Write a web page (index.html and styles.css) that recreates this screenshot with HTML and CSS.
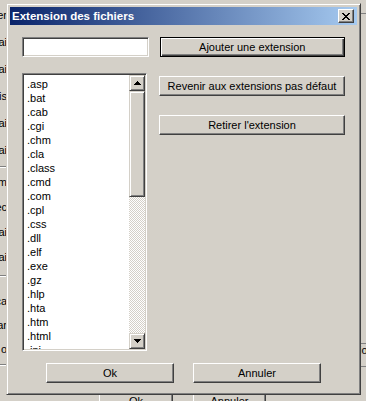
FILE: index.html
```html
<!DOCTYPE html>
<html lang="fr">
<head>
    <meta charset="UTF-8">
    <meta name="viewport" content="width=device-width, initial-scale=1.0">
    <title>Extension des fichiers</title>
    <link rel="stylesheet" href="styles.css">
</head>
<body>
<div class="screen">

    <!-- fenetre derriere -->
    <div class="backdrop">
        <div class="strip">
            <div class="grp g1">
                <div class="cut">er</div>
                <div class="cut">ai</div>
                <div class="cut">ai</div>
                <div class="cut">ilis</div>
                <div class="cut">ai</div>
                <div class="cut">ai</div>
            </div>
            <div class="sep s1"></div>
            <div class="grp g2">
                <div class="cut">m</div>
                <div class="cut">ec</div>
                <div class="cut">ai</div>
                <div class="cut">ai</div>
            </div>
            <div class="sep s2"></div>
            <div class="grp g3">
                <div class="cut">ca</div>
                <div class="cut">ar</div>
                <div class="cut">o</div>
            </div>
            <div class="sep s3"></div>
        </div>
        <div class="behind">
            <div class="btn back-ok">Ok</div>
            <div class="btn back-cancel">Annuler</div>
        </div>
        <div class="rstrip">
            <div class="rline r1"></div>
            <div class="rline r2"></div>
            <div class="rtext">io</div>
            <div class="rline r3"></div>
        </div>
    </div>

    <!-- dialogue -->
    <div class="dialog">
        <div class="titlebar">
            <span class="title">Extension des fichiers</span>
            <div class="close">
                <svg width="8" height="7" viewBox="0 0 8 7"><path d="M0 0h2v1h-2zM6 0h2v1h-2zM1 1h2v1h-2zM5 1h2v1h-2zM2 2h4v1h-4zM3 3h2v1h-2zM2 4h4v1h-4zM1 5h2v1h-2zM5 5h2v1h-2zM0 6h2v1h-2zM6 6h2v1h-2z" fill="#000"/></svg>
            </div>
        </div>

        <div class="content">
            <div class="row-top">
                <div class="field"></div>
                <div class="btn default wide">Ajouter une extension</div>
            </div>

            <div class="row-mid">
                <div class="list">
                    <div class="items">
                        <div>.asp</div>
                        <div>.bat</div>
                        <div>.cab</div>
                        <div>.cgi</div>
                        <div>.chm</div>
                        <div>.cla</div>
                        <div>.class</div>
                        <div>.cmd</div>
                        <div>.com</div>
                        <div>.cpl</div>
                        <div>.css</div>
                        <div>.dll</div>
                        <div>.elf</div>
                        <div>.exe</div>
                        <div>.gz</div>
                        <div>.hlp</div>
                        <div>.hta</div>
                        <div>.htm</div>
                        <div>.html</div>
                        <div>.ini</div>
                        <div>.js</div>
                    </div>
                    <div class="sb">
                        <div class="raised sb-btn">
                            <svg width="7" height="4" viewBox="0 0 7 4"><path d="M3 0h1v1h-1zM2 1h3v1h-3zM1 2h5v1h-5zM0 3h7v1h-7z" fill="#000"/></svg>
                        </div>
                        <div class="raised thumb"></div>
                        <div class="track"></div>
                        <div class="raised sb-btn">
                            <svg width="7" height="4" viewBox="0 0 7 4"><path d="M0 0h7v1h-7zM1 1h5v1h-5zM2 2h3v1h-3zM3 3h1v1h-1z" fill="#000"/></svg>
                        </div>
                    </div>
                </div>

                <div class="side">
                    <div class="btn wide">Revenir aux extensions pas défaut</div>
                    <div class="btn wide">Retirer l'extension</div>
                </div>
            </div>

            <div class="row-foot">
                <div class="btn foot">Ok</div>
                <div class="btn foot">Annuler</div>
            </div>
        </div>
    </div>

</div>
</body>
</html>
```

FILE: styles.css
```css
*{
    box-sizing: border-box;
}
body{
    margin: 0;
    background-color: #d4d0c8;
    font-family: "Liberation Sans", Arial, sans-serif;
    font-size: 11px;
    color: #000;
}
.screen{
    position: relative;
    width: 366px;
    height: 401px;
    overflow: hidden;
}

/* fenetre derriere */
.backdrop{
    display: grid;
    grid-template-columns: 7px 1fr 6px;
    height: 401px;
}
.strip{
    overflow: hidden;
    padding-top: 1px;
}
.cut{
    display: flex;
    justify-content: flex-end;
    align-items: center;
    white-space: nowrap;
}
.g1 .cut{ height: 27px; }
.g2 .cut{ height: 25px; }
.g3 .cut{ height: 24px; }
.sep{
    height: 2px;
    border-top: 1px solid #808080;
    border-bottom: 1px solid #fff;
}
.s1{ margin-top: 3px; }
.g2{ margin-top: 1px; }
.s2{ margin-top: 6px; }
.g3{ margin-top: 12px; }
.s3{ margin-top: 3px; }

.behind{
    display: flex;
    gap: 20px;
    padding: 389px 0 0 92px;
}
.back-ok{ width: 74px; height: 23px; }
.back-cancel{ width: 73px; height: 23px; }

.rstrip{
    overflow: hidden;
    white-space: nowrap;
}
.rline{
    height: 1px;
    background-color: #808080;
}
.r1{ margin-top: 13px; }
.r2{ margin-top: 329px; }
.rtext{
    height: 12px;
    line-height: 12px;
    margin-left: -1px;
}
.r3{ margin-top: 10px; }

/* dialogue */
.dialog{
    position: absolute;
    left: 6px;
    top: 3px;
    width: 355px;
    height: 392px;
    padding: 3px;
    background-color: #d4d0c8;
    border: 1px solid;
    border-color: #d4d0c8 #404040 #404040 #d4d0c8;
    box-shadow: inset 1px 1px #fff, inset -1px -1px #808080;
    display: flex;
    flex-direction: column;
}
.titlebar{
    height: 18px;
    display: flex;
    align-items: center;
    justify-content: space-between;
    padding: 0 3px 0 2px;
    background: linear-gradient(to right, #0a246a, #a6caf0);
}
.title{
    color: #fff;
    font-weight: bold;
    font-size: 11.5px;
}
.close{
    width: 16px;
    height: 14px;
    background-color: #d4d0c8;
    border: 1px solid;
    border-color: #fff #404040 #404040 #fff;
    box-shadow: inset -1px -1px #808080;
    display: flex;
    align-items: center;
    justify-content: center;
}

.content{
    padding: 12px 12px 0 12px;
    display: flex;
    flex-direction: column;
}
.row-top{
    display: flex;
    gap: 11px;
}
.field{
    width: 127px;
    height: 20px;
    background-color: #fff;
    border: 1px solid;
    border-color: #808080 #fff #fff #808080;
    box-shadow: inset 1px 1px #404040, inset -1px -1px #d4d0c8;
}
.btn{
    display: flex;
    align-items: center;
    justify-content: center;
    background-color: #d4d0c8;
    border: 1px solid;
    border-color: #fff #404040 #404040 #fff;
    box-shadow: inset -1px -1px #808080;
    white-space: nowrap;
}
.btn.default{
    border-color: #000;
    box-shadow: inset 1px 1px #fff, inset -1px -1px #404040, inset -2px -2px #808080;
}
.wide{
    width: 186px;
    height: 20px;
}

.row-mid{
    display: flex;
    gap: 12px;
    margin-top: 16px;
}
.list{
    width: 126px;
    height: 278px;
    display: flex;
    background-color: #fff;
    border: 1px solid;
    border-color: #808080 #fff #fff #808080;
    box-shadow: inset 1px 1px #404040, inset -1px -1px #d4d0c8;
    padding: 1px;
}
.items{
    flex: 1;
    overflow: hidden;
    padding: 2px 0 0 3px;
    line-height: 14px;
}
.sb{
    width: 16px;
    display: flex;
    flex-direction: column;
    background: repeating-conic-gradient(#fff 0 25%, #d4d0c8 0 50%) 0 0 / 2px 2px;
}
.raised{
    background-color: #d4d0c8;
    border: 1px solid;
    border-color: #d4d0c8 #404040 #404040 #d4d0c8;
    box-shadow: inset 1px 1px #fff, inset -1px -1px #808080;
}
.sb-btn{
    height: 16px;
    display: flex;
    align-items: center;
    justify-content: center;
}
.thumb{
    height: 106px;
}
.track{
    flex: 1;
}
.side{
    display: flex;
    flex-direction: column;
    gap: 19px;
    padding-top: 3px;
}

.row-foot{
    display: flex;
    justify-content: center;
    gap: 19px;
    margin-top: 12px;
}
.foot{
    width: 128px;
    height: 20px;
}
```
